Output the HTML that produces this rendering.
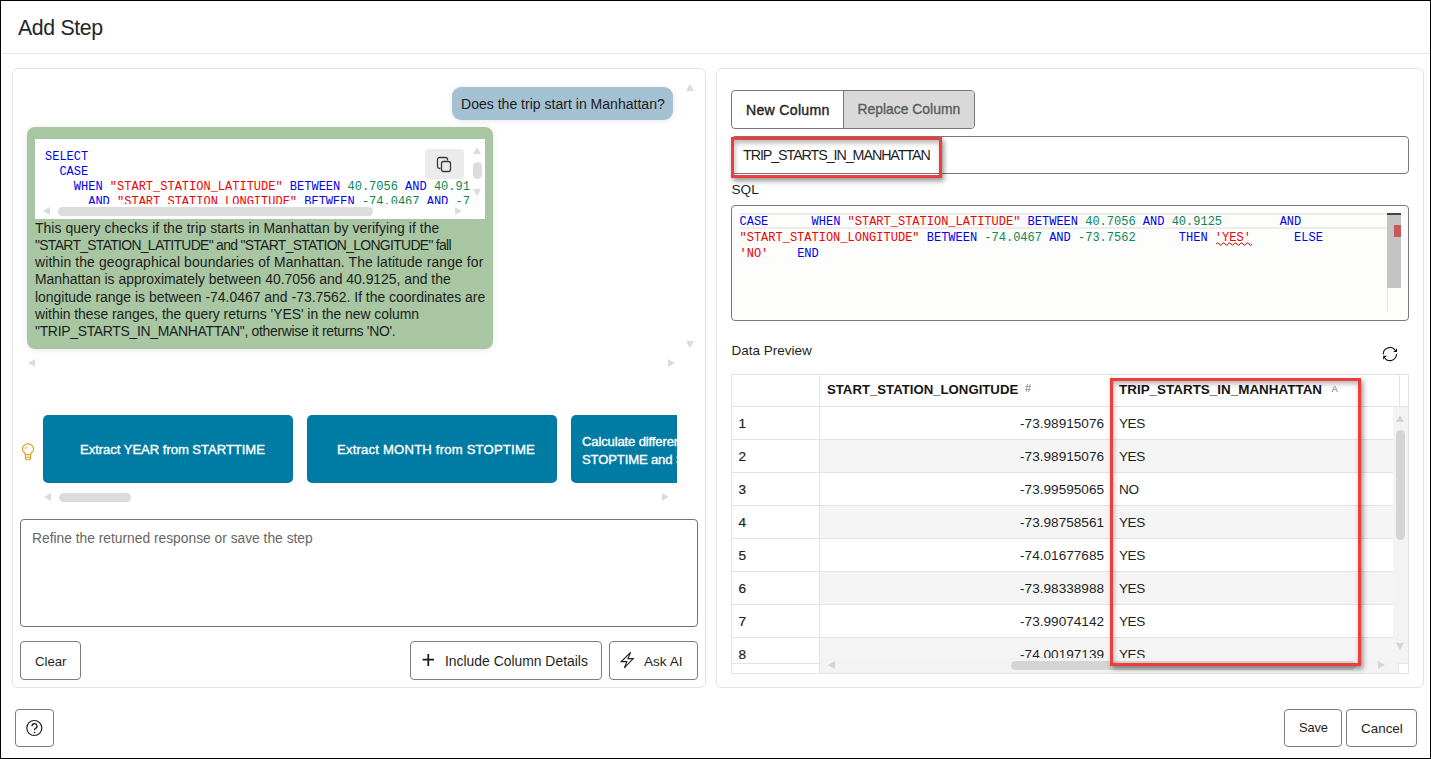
<!DOCTYPE html>
<html><head><meta charset="utf-8">
<style>
*{box-sizing:border-box;margin:0;padding:0}
html,body{width:1431px;height:759px;overflow:hidden;background:#fff}
body{position:relative;font-family:"Liberation Sans",sans-serif;color:#1f1f1f}
.a{position:absolute}
.t{position:absolute;white-space:pre;line-height:1}
.m{font-family:"Liberation Mono",monospace}
.frame{left:0;top:0;width:1431px;height:759px;border:1px solid #000}
.panel{border:1px solid #e4e4e4;border-radius:6px;background:#fff}
.btn{position:absolute;border:1px solid #7d7d7d;border-radius:4px;background:#fff}
.tri{position:absolute;width:0;height:0}
.sb{position:absolute;background:#dcdcdc;border-radius:5px}
.kw{color:#0000f0}.st{color:#f00000}.nu{color:#098658}
</style></head><body>
<div class="a frame"></div>
<!-- header -->
<div class="t" style="left:18px;top:17.8px;font-size:21.3px;letter-spacing:-0.35px;color:#262626">Add Step</div>
<div class="a" style="left:1px;top:53px;width:1429px;height:1px;background:#e6e6e6"></div>

<!-- left panel -->
<div class="a panel" style="left:12px;top:68px;width:694px;height:620px"></div>
<!-- chat scroll arrows -->
<div class="tri" style="left:686px;top:84px;border-left:4.5px solid transparent;border-right:4.5px solid transparent;border-bottom:7px solid #dcdcdc"></div>
<div class="tri" style="left:686px;top:341px;border-left:4.5px solid transparent;border-right:4.5px solid transparent;border-top:7px solid #dcdcdc"></div>
<div class="tri" style="left:28px;top:359px;border-top:4.5px solid transparent;border-bottom:4.5px solid transparent;border-right:7px solid #dcdcdc"></div>
<div class="tri" style="left:668px;top:359px;border-top:4.5px solid transparent;border-bottom:4.5px solid transparent;border-left:7px solid #dcdcdc"></div>

<!-- user bubble -->
<div class="a" style="left:452px;top:87px;width:221px;height:33px;background:#a3c1d3;border-radius:9px;box-shadow:0 1px 6px rgba(0,0,0,.10)"></div>
<div class="t" style="left:461px;top:97px;font-size:14.05px;color:#1c1c1c">Does the trip start in Manhattan?</div>

<!-- green bubble -->
<div class="a" style="left:27px;top:127px;width:466px;height:222px;background:#a7c6a1;border-radius:8px;box-shadow:0 1px 6px rgba(0,0,0,.10)"></div>
<div class="a" style="left:35px;top:139px;width:450px;height:80px;background:#fff"></div>
<div class="a m" style="left:45px;top:149.5px;width:425px;height:54.5px;overflow:hidden;font-size:12px;line-height:15px;white-space:pre"><span class="kw">SELECT</span>
  <span class="kw">CASE</span>
    <span class="kw">WHEN</span> <span class="st">"START_STATION_LATITUDE"</span> <span class="kw">BETWEEN</span> <span class="nu">40.7056</span> <span class="kw">AND</span> <span class="nu">40.9125</span>
      <span class="kw">AND</span> <span class="st">"START_STATION_LONGITUDE"</span> <span class="kw">BETWEEN</span> <span class="nu">-74.0467</span> <span class="kw">AND</span> <span class="nu">-73.7562</span></div>
<!-- copy btn -->
<div class="a" style="left:425px;top:149px;width:39px;height:30px;background:#ebebeb;border-radius:4px"></div>
<svg class="a" style="left:436px;top:156px" width="17" height="17" viewBox="0 0 17 17"><path d="M4.5 12.5 H3.5 A2 2 0 0 1 1.5 10.5 V3.5 A2 2 0 0 1 3.5 1.5 H9.5 A2 2 0 0 1 11.5 3.5 V4.5" fill="none" stroke="#3a3a3a" stroke-width="1.3"/><rect x="5.5" y="5.5" width="9" height="10" rx="2" fill="none" stroke="#3a3a3a" stroke-width="1.3"/></svg>
<!-- code scrollbars -->
<div class="tri" style="left:473px;top:147px;border-left:4.5px solid transparent;border-right:4.5px solid transparent;border-bottom:7px solid #dcdcdc"></div>
<div class="sb" style="left:473px;top:162px;width:9px;height:17px"></div>
<div class="tri" style="left:473px;top:189px;border-left:4.5px solid transparent;border-right:4.5px solid transparent;border-top:7px solid #dcdcdc"></div>
<div class="tri" style="left:43px;top:207px;border-top:4.5px solid transparent;border-bottom:4.5px solid transparent;border-right:7px solid #dcdcdc"></div>
<div class="sb" style="left:58px;top:207px;width:315px;height:9px"></div>
<div class="tri" style="left:455px;top:207px;border-top:4.5px solid transparent;border-bottom:4.5px solid transparent;border-left:7px solid #dcdcdc"></div>
<!-- explanation -->
<div class="a" style="left:35px;top:219.5px;font-size:13.95px;line-height:17.3px;white-space:pre;color:#1d1d1d"><div style="letter-spacing:0.055px">This query checks if the trip starts in Manhattan by verifying if the</div><div style="letter-spacing:-0.69px">"START_STATION_LATITUDE" and "START_STATION_LONGITUDE" fall</div><div style="letter-spacing:0.11px">within the geographical boundaries of Manhattan. The latitude range for</div><div style="letter-spacing:-0.02px">Manhattan is approximately between 40.7056 and 40.9125, and the</div><div style="letter-spacing:0px">longitude range is between -74.0467 and -73.7562. If the coordinates are</div><div style="letter-spacing:-0.04px">within these ranges, the query returns 'YES' in the new column</div><div style="letter-spacing:-0.3px">"TRIP_STARTS_IN_MANHATTAN", otherwise it returns 'NO'.</div></div>

<!-- suggestions -->
<svg class="a" style="left:21px;top:443px" width="14" height="18" viewBox="0 0 14 18"><path d="M4.4 11.6 C4.4 9.6 1.4 8.4 1.4 6.4 A5.6 5.6 0 0 1 12.6 6.4 C12.6 8.4 9.6 9.6 9.6 11.6" fill="none" stroke="#d9a11c" stroke-width="1.15"/><path d="M4.4 11.6 H9.6 V15.2 A1.6 1.6 0 0 1 8 16.8 H6 A1.6 1.6 0 0 1 4.4 15.2 Z M4.4 14.2 H9.6" fill="none" stroke="#d9a11c" stroke-width="1.1"/><path d="M4.2 6 A2.6 2.6 0 0 1 6.3 3.8" fill="none" stroke="#d9a11c" stroke-width="0.9"/></svg>
<div class="a" style="left:43px;top:415px;width:250px;height:68px;background:#007ba4;border-radius:5px"></div>
<div class="t" style="left:80px;top:442.5px;font-size:13.1px;-webkit-text-stroke:0.35px #fff;letter-spacing:-0.05px;color:#fff">Extract YEAR from STARTTIME</div>
<div class="a" style="left:307px;top:415px;width:250px;height:68px;background:#007ba4;border-radius:5px"></div>
<div class="t" style="left:337px;top:442.5px;font-size:13.1px;-webkit-text-stroke:0.35px #fff;letter-spacing:0.2px;color:#fff">Extract MONTH from STOPTIME</div>
<div class="a" style="left:571px;top:415px;width:106px;height:68px;overflow:hidden"><div class="a" style="left:0;top:0;width:250px;height:68px;background:#007ba4;border-radius:5px"></div><div class="a" style="left:11px;top:18px;font-size:13.1px;-webkit-text-stroke:0.35px #fff;letter-spacing:-0.15px;line-height:18px;color:#fff;white-space:pre">Calculate difference between
STOPTIME and STARTTIME</div></div>
<div class="tri" style="left:44px;top:493px;border-top:4.5px solid transparent;border-bottom:4.5px solid transparent;border-right:7px solid #dcdcdc"></div>
<div class="sb" style="left:59px;top:493px;width:72px;height:9px"></div>
<div class="tri" style="left:662px;top:493px;border-top:4.5px solid transparent;border-bottom:4.5px solid transparent;border-left:7px solid #dcdcdc"></div>

<!-- textarea -->
<div class="a" style="left:20px;top:519px;width:678px;height:108px;border:1px solid #737373;border-radius:4px"></div>
<div class="t" style="left:32px;top:532px;font-size:13.8px;color:#666">Refine the returned response or save the step</div>

<!-- buttons -->
<div class="btn" style="left:20px;top:641px;width:61px;height:39px"></div>
<div class="t" style="left:35px;top:655px;font-size:13.2px;color:#1f1f1f">Clear</div>
<div class="btn" style="left:410px;top:641px;width:192px;height:39px"></div>
<svg class="a" style="left:422px;top:653px" width="13" height="14" viewBox="0 0 13 14"><path d="M6.3 1 V13 M0.6 6.7 H12" stroke="#1a1a1a" stroke-width="1.75"/></svg>
<div class="t" style="left:445px;top:655px;font-size:13.9px;color:#1f1f1f">Include Column Details</div>
<div class="btn" style="left:609px;top:641px;width:89px;height:39px"></div>
<svg class="a" style="left:620px;top:651px" width="15" height="19" viewBox="0 0 15 19"><path d="M10.6 1.3 L1.3 10.6 H6.9 L4.3 16.9 L13.2 7.6 H7.9 Z" fill="none" stroke="#1f1f1f" stroke-width="1.1" stroke-linejoin="miter"/></svg>
<div class="t" style="left:644px;top:655px;font-size:13.6px;color:#1f1f1f">Ask AI</div>

<!-- right panel -->
<div class="a panel" style="left:716px;top:68px;width:708px;height:620px"></div>

<!-- segmented -->
<div class="a" style="left:731px;top:90px;width:244px;height:39px;border:1px solid #777;border-radius:4px;overflow:hidden"><div class="a" style="left:111px;top:0;width:132px;height:37px;background:#d9d9d9;border-left:1px solid #777"></div></div>
<div class="t" style="left:746px;top:103.3px;font-size:14.1px;-webkit-text-stroke:0.4px #1f1f1f;letter-spacing:0.3px;color:#1f1f1f">New Column</div>
<div class="t" style="left:857.5px;top:103.3px;font-size:13.9px;-webkit-text-stroke:0.35px #5c5c5c;color:#5c5c5c">Replace Column</div>
<!-- name input -->
<div class="a" style="left:731px;top:136px;width:678px;height:38px;border:1px solid #7a7a7a;border-radius:4px"></div>
<div class="t" style="left:743px;top:147.5px;font-size:14.3px;letter-spacing:-1.08px;color:#1f1f1f">TRIP_STARTS_IN_MANHATTAN</div>
<div class="a" style="left:731px;top:137px;width:211px;height:41px;border:3px solid #ee3d3d;box-shadow:2px 3px 5px rgba(0,0,0,.42), inset 1px 3px 5px rgba(0,0,0,.28)"></div>
<div class="t" style="left:731.5px;top:183px;font-size:13.6px;color:#1f1f1f">SQL</div>
<!-- sql editor -->
<div class="a" style="left:731px;top:205px;width:678px;height:116px;border:1px solid #7a7a7a;border-radius:4px;background:#fdfdfb"></div>
<div class="a" style="left:739px;top:213px;width:648px;height:16px;background:#fdfdfb;border-top:2px solid #ececec;border-bottom:2px solid #ececec"></div>
<div class="a m" style="left:739.5px;top:213.5px;font-size:12px;line-height:16px;white-space:pre"><span class="kw">CASE</span>      <span class="kw">WHEN</span> <span class="st">"START_STATION_LATITUDE"</span> <span class="kw">BETWEEN</span> <span class="nu">40.7056</span> <span class="kw">AND</span> <span class="nu">40.9125</span>        <span class="kw">AND</span>
<span class="st">"START_STATION_LONGITUDE"</span> <span class="kw">BETWEEN</span> <span class="nu">-74.0467</span> <span class="kw">AND</span> <span class="nu">-73.7562</span>      <span class="kw">THEN</span> <span class="st">'YES'</span>      <span class="kw">ELSE</span>
<span class="st">'NO'</span>    <span class="kw">END</span></div>
<svg class="a" style="left:1216px;top:241px" width="36" height="5" viewBox="0 0 36 5"><path d="M0 3 Q1.5 0.5 3 3 T6 3 T9 3 T12 3 T15 3 T18 3 T21 3 T24 3 T27 3 T30 3 T33 3 T36 3" fill="none" stroke="#e00" stroke-width="1"/></svg>
<div class="a" style="left:1387px;top:213px;width:14px;height:75px;background:#c4c4c4;border-top:2px solid #444"></div>
<div class="a" style="left:1394px;top:225px;width:7px;height:12px;background:#c55a5a"></div>
<div class="a" style="left:1387px;top:288px;width:1px;height:24px;background:#e6e6e6"></div>

<!-- data preview -->
<div class="t" style="left:731.5px;top:344px;font-size:13.5px;color:#1f1f1f">Data Preview</div>
<svg class="a" style="left:1382px;top:346px" width="16" height="16" viewBox="0 0 16 16"><path d="M1.3 8.4 A6.6 6.6 0 0 1 13 3.9" fill="none" stroke="#161616" stroke-width="1.15"/><path d="M14.5 7.9 A6.6 6.6 0 0 1 2.9 12.3" fill="none" stroke="#161616" stroke-width="1.15"/><path d="M15 2.2 V6 H11.2 Z" fill="#161616"/><path d="M1.1 9.8 H4.9 L1.1 13.8 Z" fill="#161616"/></svg>

<!-- table -->
<div class="a" style="left:731px;top:374px;width:678px;height:300px;border:1px solid #e3e3e3;background:#fff"></div>
<div class="a" style="left:819px;top:375px;width:1px;height:298px;background:#e3e3e3"></div>
<div class="a" style="left:1111px;top:375px;width:1px;height:31px;background:#e3e3e3"></div>
<div class="a" style="left:1399px;top:375px;width:1px;height:31px;background:#e3e3e3"></div>
<div class="a" style="left:732px;top:406px;width:676px;height:1px;background:#e3e3e3"></div>
<div class="t" style="left:827px;top:382.5px;font-size:13.2px;font-weight:bold;color:#161513">START_STATION_LONGITUDE</div>
<div class="t" style="left:1025px;top:383px;font-size:11px;color:#777">#</div>
<div class="t" style="left:1119px;top:382.5px;font-size:13.45px;font-weight:bold;color:#161513">TRIP_STARTS_IN_MANHATTAN</div>
<div class="t" style="left:1331.5px;top:383.5px;font-size:9.5px;color:#777">A</div>
<div class="a" style="left:820px;top:407px;width:573px;height:251px;overflow:hidden">
<div class="a" style="left:0;top:0px;width:573px;height:33px;background:#fff;border-bottom:1px solid #e3e3e3"></div>
<div class="t" style="left:0;top:9.5px;width:284px;text-align:right;font-size:13.6px;color:#1f1f1f">-73.98915076</div>
<div class="t" style="left:299px;top:9.5px;font-size:13.6px;letter-spacing:-0.5px;color:#1f1f1f">YES</div>
<div class="a" style="left:0;top:33px;width:573px;height:33px;background:#f5f5f5;border-bottom:1px solid #e3e3e3"></div>
<div class="t" style="left:0;top:42.5px;width:284px;text-align:right;font-size:13.6px;color:#1f1f1f">-73.98915076</div>
<div class="t" style="left:299px;top:42.5px;font-size:13.6px;letter-spacing:-0.5px;color:#1f1f1f">YES</div>
<div class="a" style="left:0;top:66px;width:573px;height:33px;background:#fff;border-bottom:1px solid #e3e3e3"></div>
<div class="t" style="left:0;top:75.5px;width:284px;text-align:right;font-size:13.6px;color:#1f1f1f">-73.99595065</div>
<div class="t" style="left:299px;top:75.5px;font-size:13.6px;letter-spacing:-0.3px;color:#1f1f1f">NO</div>
<div class="a" style="left:0;top:99px;width:573px;height:33px;background:#f5f5f5;border-bottom:1px solid #e3e3e3"></div>
<div class="t" style="left:0;top:108.5px;width:284px;text-align:right;font-size:13.6px;color:#1f1f1f">-73.98758561</div>
<div class="t" style="left:299px;top:108.5px;font-size:13.6px;letter-spacing:-0.5px;color:#1f1f1f">YES</div>
<div class="a" style="left:0;top:132px;width:573px;height:33px;background:#fff;border-bottom:1px solid #e3e3e3"></div>
<div class="t" style="left:0;top:141.5px;width:284px;text-align:right;font-size:13.6px;color:#1f1f1f">-74.01677685</div>
<div class="t" style="left:299px;top:141.5px;font-size:13.6px;letter-spacing:-0.5px;color:#1f1f1f">YES</div>
<div class="a" style="left:0;top:165px;width:573px;height:33px;background:#f5f5f5;border-bottom:1px solid #e3e3e3"></div>
<div class="t" style="left:0;top:174.5px;width:284px;text-align:right;font-size:13.6px;color:#1f1f1f">-73.98338988</div>
<div class="t" style="left:299px;top:174.5px;font-size:13.6px;letter-spacing:-0.5px;color:#1f1f1f">YES</div>
<div class="a" style="left:0;top:198px;width:573px;height:33px;background:#fff;border-bottom:1px solid #e3e3e3"></div>
<div class="t" style="left:0;top:207.5px;width:284px;text-align:right;font-size:13.6px;color:#1f1f1f">-73.99074142</div>
<div class="t" style="left:299px;top:207.5px;font-size:13.6px;letter-spacing:-0.5px;color:#1f1f1f">YES</div>
<div class="a" style="left:0;top:231px;width:573px;height:33px;background:#f5f5f5;border-bottom:1px solid #e3e3e3"></div>
<div class="t" style="left:0;top:240.5px;width:284px;text-align:right;font-size:13.6px;color:#1f1f1f">-74.00197139</div>
<div class="t" style="left:299px;top:240.5px;font-size:13.6px;letter-spacing:-0.5px;color:#1f1f1f">YES</div>
</div>
<div class="a" style="left:732px;top:439px;width:87px;height:1px;background:#e3e3e3"></div>
<div class="t" style="left:738.5px;top:416.5px;font-size:13.6px;-webkit-text-stroke:0.22px #1f1f1f;color:#1f1f1f">1</div>
<div class="a" style="left:732px;top:472px;width:87px;height:1px;background:#e3e3e3"></div>
<div class="t" style="left:738.5px;top:449.5px;font-size:13.6px;-webkit-text-stroke:0.22px #1f1f1f;color:#1f1f1f">2</div>
<div class="a" style="left:732px;top:505px;width:87px;height:1px;background:#e3e3e3"></div>
<div class="t" style="left:738.5px;top:482.5px;font-size:13.6px;-webkit-text-stroke:0.22px #1f1f1f;color:#1f1f1f">3</div>
<div class="a" style="left:732px;top:538px;width:87px;height:1px;background:#e3e3e3"></div>
<div class="t" style="left:738.5px;top:515.5px;font-size:13.6px;-webkit-text-stroke:0.22px #1f1f1f;color:#1f1f1f">4</div>
<div class="a" style="left:732px;top:571px;width:87px;height:1px;background:#e3e3e3"></div>
<div class="t" style="left:738.5px;top:548.5px;font-size:13.6px;-webkit-text-stroke:0.22px #1f1f1f;color:#1f1f1f">5</div>
<div class="a" style="left:732px;top:604px;width:87px;height:1px;background:#e3e3e3"></div>
<div class="t" style="left:738.5px;top:581.5px;font-size:13.6px;-webkit-text-stroke:0.22px #1f1f1f;color:#1f1f1f">6</div>
<div class="a" style="left:732px;top:637px;width:87px;height:1px;background:#e3e3e3"></div>
<div class="t" style="left:738.5px;top:614.5px;font-size:13.6px;-webkit-text-stroke:0.22px #1f1f1f;color:#1f1f1f">7</div>
<div class="t" style="left:738.5px;top:647.5px;font-size:13.6px;-webkit-text-stroke:0.22px #1f1f1f;color:#1f1f1f">8</div>
<div class="a" style="left:732px;top:663px;width:87px;height:1px;background:#e3e3e3"></div>
<div class="a" style="left:732px;top:664px;width:87px;height:9px;background:#fff"></div>
<div class="a" style="left:1393px;top:407px;width:15px;height:266px;background:#f3f3f3"></div>
<div class="a" style="left:820px;top:658px;width:578px;height:15px;background:#f3f3f3"></div>
<div class="a" style="left:1398px;top:663px;width:10px;height:10px;background:#fff;border-left:1px solid #e6e6e6;border-top:1px solid #e6e6e6"></div>
<div class="tri" style="left:1396px;top:415px;border-left:4.5px solid transparent;border-right:4.5px solid transparent;border-bottom:7px solid #d4d4d4"></div>
<div class="sb" style="left:1396px;top:430px;width:9px;height:110px;background:#d4d4d4"></div>
<div class="tri" style="left:1396px;top:643px;border-left:4.5px solid transparent;border-right:4.5px solid transparent;border-top:7px solid #d4d4d4"></div>
<div class="tri" style="left:828px;top:661px;border-top:4.5px solid transparent;border-bottom:4.5px solid transparent;border-right:7px solid #d4d4d4"></div>
<div class="sb" style="left:1011px;top:661px;width:345px;height:9px;background:#d4d4d4"></div>
<div class="tri" style="left:1378px;top:661px;border-top:4.5px solid transparent;border-bottom:4.5px solid transparent;border-left:7px solid #d4d4d4"></div>
<div class="a" style="left:1110px;top:378px;width:251px;height:288px;border:3px solid #ee3d3d;box-shadow:2px 3px 5px rgba(0,0,0,.42), inset 1px 3px 5px rgba(0,0,0,.28)"></div>

<!-- footer -->
<div class="btn" style="left:15px;top:709px;width:39px;height:38px"></div>
<svg class="a" style="left:25px;top:719px" width="19" height="19" viewBox="0 0 19 19"><circle cx="9.3" cy="9" r="7.5" fill="none" stroke="#1f1f1f" stroke-width="1.2"/><path d="M7 7.3 A2.5 2.5 0 1 1 10.3 9.6 C9.6 9.9 9.5 10.4 9.5 11.3" fill="none" stroke="#1f1f1f" stroke-width="1.3"/><circle cx="9.5" cy="13.5" r="0.8" fill="#1f1f1f"/></svg>
<div class="btn" style="left:1284px;top:709px;width:58px;height:38px"></div>
<div class="t" style="left:1299px;top:722px;font-size:12.9px;letter-spacing:-0.15px;color:#1f1f1f">Save</div>
<div class="btn" style="left:1346px;top:709px;width:71px;height:38px"></div>
<div class="t" style="left:1361px;top:721.8px;font-size:13.45px;color:#1f1f1f">Cancel</div>
</body></html>
